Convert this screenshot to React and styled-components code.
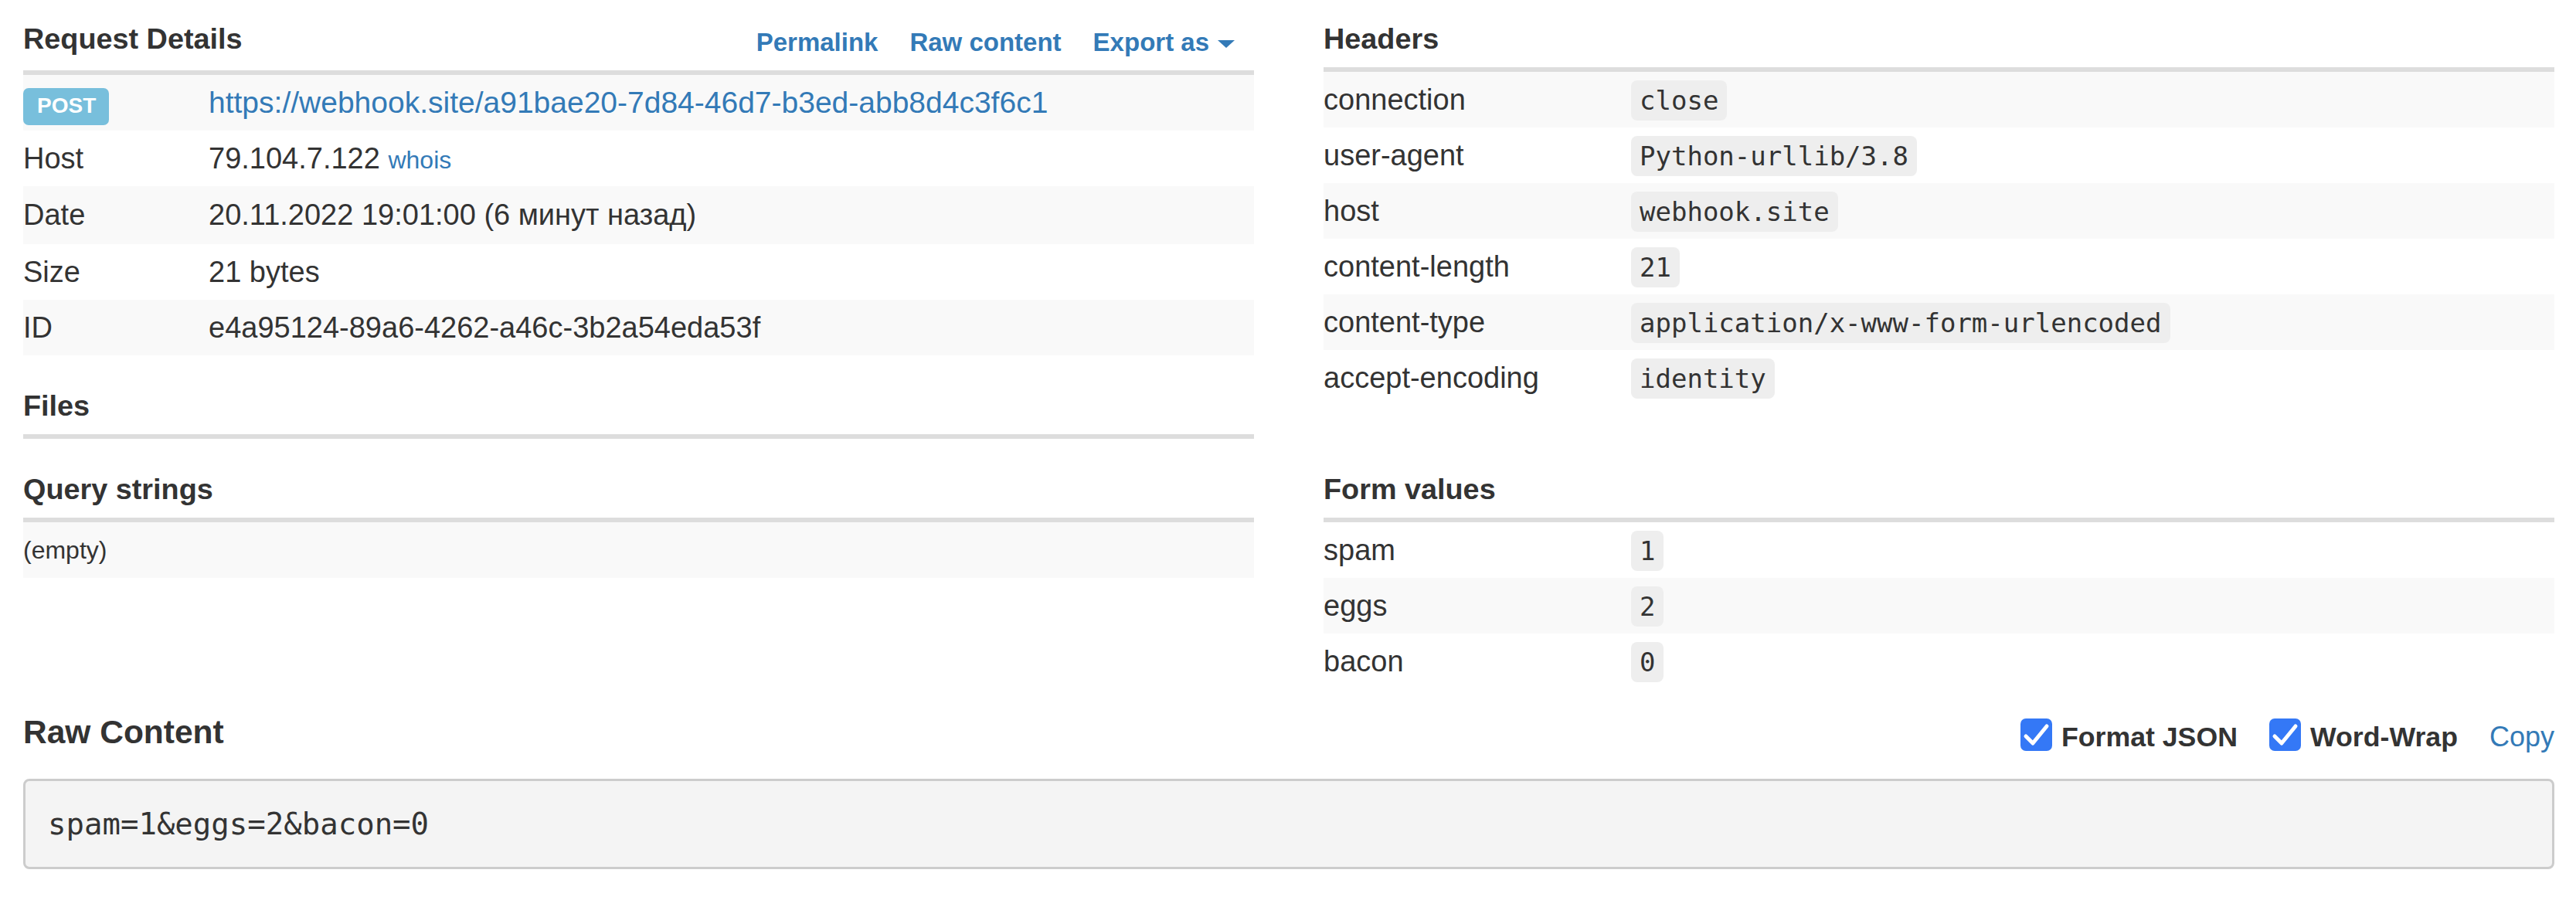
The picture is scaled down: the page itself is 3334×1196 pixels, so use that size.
import React from "react";
import styled, { createGlobalStyle } from "styled-components";

const Global = createGlobalStyle`
  html, body { margin: 0; padding: 0; background: #fff; }
  body {
    font-family: "Liberation Sans", Arial, Helvetica, sans-serif;
    color: #333;
    font-size: 38px;
  }
  * { box-sizing: border-box; }
`;

const Page = styled.div`
  padding: 29px 28px 60px 30px;
`;

const Grid = styled.div`
  display: grid;
  grid-template-columns: 1fr 1fr;
  column-gap: 90px;
  row-gap: 44px;
`;

const Stack = styled.div`
  display: flex;
  flex-direction: column;
  gap: 44px;
`;

const Section = styled.section`
  display: flex;
  flex-direction: column;
`;

const SectionHeader = styled.div`
  display: flex;
  justify-content: space-between;
  align-items: flex-start;
  padding-bottom: ${(p) => (p.$plain ? 0 : 16)}px;
  border-bottom: ${(p) => (p.$plain ? "none" : "6px solid #ddd")};
`;

const Title = styled.h4`
  margin: 0;
  font-size: ${(p) => (p.$large ? 42.5 : 37.8)}px;
  line-height: ${(p) => (p.$large ? 46 : 42)}px;
  font-weight: 700;
  color: #333;
`;

const Links = styled.nav`
  display: flex;
  gap: 41px;
  margin-top: 6px;
  padding-right: 25px;
`;

const NavLink = styled.a`
  font-size: 33px;
  line-height: 40px;
  font-weight: 700;
  color: #337ab7;
  text-decoration: none;
  white-space: nowrap;
`;

const Caret = styled.span`
  display: inline-block;
  width: 0;
  height: 0;
  margin-left: 11px;
  vertical-align: middle;
  border-top: 10px solid #337ab7;
  border-left: 11px solid transparent;
  border-right: 11px solid transparent;
`;

const Row = styled.div`
  display: grid;
  grid-template-columns: ${(p) => p.$label}px 1fr;
  background: ${(p) => (p.$striped ? "#f9f9f9" : "#fff")};
  line-height: ${(p) => (p.$tall ? 75 : 72)}px;
  height: ${(p) => (p.$tall ? 75 : 72)}px;
  white-space: nowrap;
`;

const Cell = styled.div`
  font-size: ${(p) => (p.$small ? 32 : 38)}px;
  color: #333;
  overflow: hidden;
`;

const Badge = styled.span`
  display: inline-block;
  font-size: 28px;
  line-height: 28px;
  font-weight: 700;
  color: #fff;
  background: #78bfdc;
  padding: 9px 17px 11px 18px;
  border-radius: 7px;
  vertical-align: baseline;
`;

const ValueLink = styled.a`
  color: #337ab7;
  text-decoration: none;
  font-size: ${(p) => (p.$small ? 32 : 39)}px;
`;

const Code = styled.code`
  font-family: "DejaVu Sans Mono", "Liberation Mono", monospace;
  font-size: 34px;
  background: #eeeeee;
  color: #333;
  padding: 6px 11px;
  border-radius: 8px;
`;

const RawSection = styled.section`
  margin-top: 33px;
  display: flex;
  flex-direction: column;
`;

const Controls = styled.div`
  display: flex;
  align-items: flex-start;
  gap: 41px;
  margin-top: 5px;
`;

const CheckLabel = styled.label`
  display: flex;
  align-items: flex-start;
  gap: 12px;
  font-size: 35.7px;
  line-height: 48px;
  font-weight: 700;
  color: #333;
`;

const Box = styled.span`
  width: 41px;
  height: 42px;
  border-radius: 7px;
  background: #3478f6;
  display: flex;
  align-items: center;
  justify-content: center;
  flex: none;
`;

const CopyLink = styled.a`
  font-size: 36px;
  line-height: 48px;
  color: #337ab7;
  text-decoration: none;
`;

const Raw = styled.pre`
  margin: 30px 0 0;
  background: #f4f4f4;
  border: 3px solid #ccc;
  border-radius: 8px;
  padding: 28px 29px;
  font-family: "DejaVu Sans Mono", "Liberation Mono", monospace;
  font-size: 39px;
  line-height: 55px;
  color: #333;
`;

const Check = () => (
  <Box>
    <svg width="41" height="42" viewBox="0 0 41 42">
      <polyline
        points="7,23 16,32 34,10"
        fill="none"
        stroke="#fff"
        strokeWidth="5"
        strokeLinecap="round"
        strokeLinejoin="round"
      />
    </svg>
  </Box>
);

const headers = [
  ["connection", "close"],
  ["user-agent", "Python-urllib/3.8"],
  ["host", "webhook.site"],
  ["content-length", "21"],
  ["content-type", "application/x-www-form-urlencoded"],
  ["accept-encoding", "identity"],
];

const formValues = [
  ["spam", "1"],
  ["eggs", "2"],
  ["bacon", "0"],
];

export default function App() {
  return (
    <Page>
      <Global />
      <Grid>
        <Stack>
          <Section>
            <SectionHeader>
              <Title>Request Details</Title>
              <Links>
                <NavLink href="#">Permalink</NavLink>
                <NavLink href="#">Raw content</NavLink>
                <NavLink href="#">
                  Export as<Caret />
                </NavLink>
              </Links>
            </SectionHeader>
            <Row $label={240} $striped>
              <Cell>
                <Badge>POST</Badge>
              </Cell>
              <Cell>
                <ValueLink href="#">
                  https://webhook.site/a91bae20-7d84-46d7-b3ed-abb8d4c3f6c1
                </ValueLink>
              </Cell>
            </Row>
            <Row $label={240}>
              <Cell>Host</Cell>
              <Cell>
                79.104.7.122 <ValueLink href="#" $small>whois</ValueLink>
              </Cell>
            </Row>
            <Row $label={240} $striped $tall>
              <Cell>Date</Cell>
              <Cell>20.11.2022 19:01:00 (6 минут назад)</Cell>
            </Row>
            <Row $label={240}>
              <Cell>Size</Cell>
              <Cell>21 bytes</Cell>
            </Row>
            <Row $label={240} $striped>
              <Cell>ID</Cell>
              <Cell>e4a95124-89a6-4262-a46c-3b2a54eda53f</Cell>
            </Row>
          </Section>
          <Section>
            <SectionHeader>
              <Title>Files</Title>
            </SectionHeader>
          </Section>
        </Stack>

        <Section>
          <SectionHeader>
            <Title>Headers</Title>
          </SectionHeader>
          {headers.map(([k, v], i) => (
            <Row key={k} $label={398} $striped={i % 2 === 0}>
              <Cell>{k}</Cell>
              <Cell>
                <Code>{v}</Code>
              </Cell>
            </Row>
          ))}
        </Section>

        <Section>
          <SectionHeader>
            <Title>Query strings</Title>
          </SectionHeader>
          <Row $label={240} $striped>
            <Cell $small>(empty)</Cell>
            <Cell />
          </Row>
        </Section>

        <Section>
          <SectionHeader>
            <Title>Form values</Title>
          </SectionHeader>
          {formValues.map(([k, v], i) => (
            <Row key={k} $label={398} $striped={i % 2 === 1}>
              <Cell>{k}</Cell>
              <Cell>
                <Code>{v}</Code>
              </Cell>
            </Row>
          ))}
        </Section>
      </Grid>

      <RawSection>
        <SectionHeader $plain>
          <Title $large>Raw Content</Title>
          <Controls>
            <CheckLabel>
              <Check />
              Format JSON
            </CheckLabel>
            <CheckLabel>
              <Check />
              Word-Wrap
            </CheckLabel>
            <CopyLink href="#">Copy</CopyLink>
          </Controls>
        </SectionHeader>
        <Raw>spam=1&amp;eggs=2&amp;bacon=0</Raw>
      </RawSection>
    </Page>
  );
}
